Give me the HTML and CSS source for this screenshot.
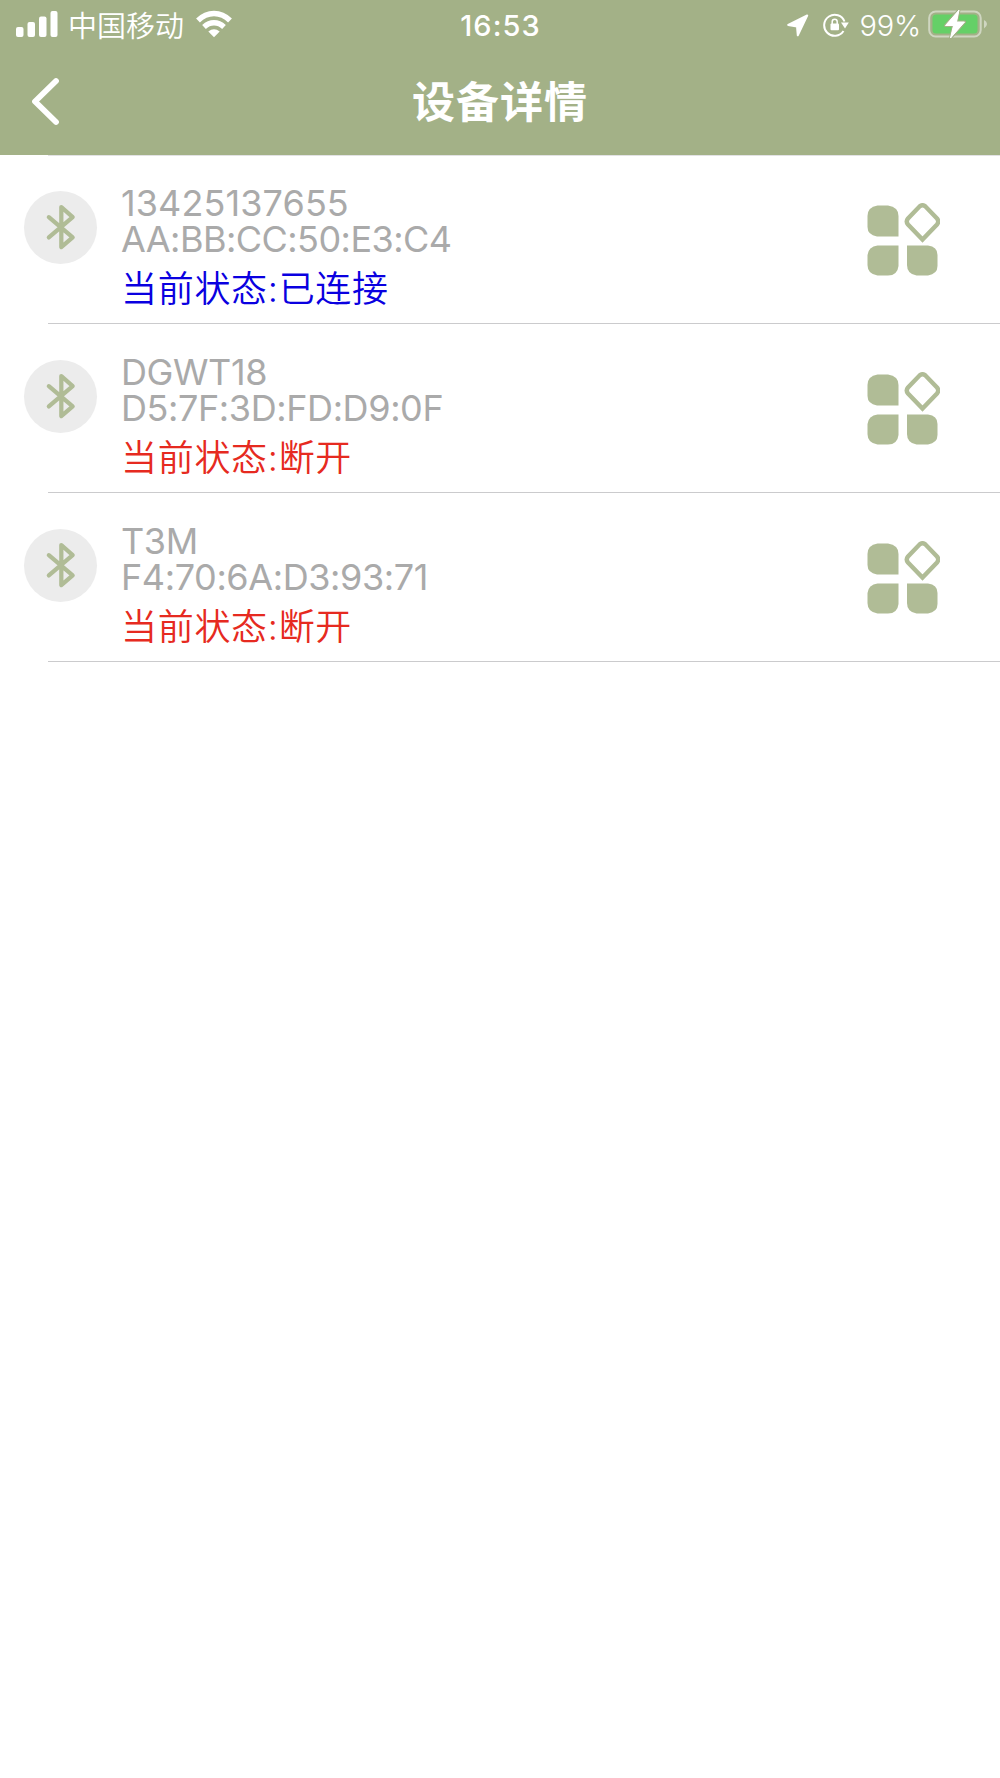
FILE: index.html
```html
<!DOCTYPE html>
<html lang="zh-CN">
<head>
  <meta charset="UTF-8">
  <meta name="viewport" content="width=device-width, initial-scale=1.0">
  <title>设备详情</title>
  <link rel="stylesheet" href="styles.css">
</head>
<body>
  <!-- shared icons -->
  <svg class="sprite" width="0" height="0">
    <symbol id="bluetooth" viewBox="0 0 72 72">
      <path d="M24.500 25.800L48 45.800L36.800 55.300V15.800L48 25.800L24.500 45.800" fill="none" stroke="#b0bc96" stroke-width="4.200" stroke-linecap="round" stroke-linejoin="round"/>
    </symbol>
    <symbol id="modules" viewBox="0 0 74 74">
      <path d="M11.500 2.500H22Q32.500 4 32.500 13V33.500H11Q1.500 32 1.500 24V13Q1.500 4 11.500 2.500Z"/>
      <path d="M11.500 42.500H32.500V63Q31.500 72.500 22 72.500H11.500Q1.500 71 1.500 62V52Q2.500 43.500 11.500 42.500Z"/>
      <path d="M41 42.500H62Q71.500 43.500 71.500 52V63Q71.500 71 62 72.500H50.500Q41 71 41 62Z"/>
      <path d="M53.500 3.500Q56.500 1 59.500 3.500L71 15.500Q73.500 18.500 71 21.500L56.500 36.500L42 21.500Q39.500 18.500 42 15.500Z" fill="none" stroke="#b0bc96" stroke-width="4.400"/>
    </symbol>
  </svg>

  <header class="header">
    <div class="status-bar">
      <div class="status-left">
        <svg class="signal" width="42" height="28" viewBox="0 0 42 28" fill="#fff">
          <rect x="0" y="17" width="7.500" height="10" rx="2"/>
          <rect x="11.500" y="12" width="7.500" height="15" rx="2"/>
          <rect x="23" y="6.500" width="7.500" height="20.500" rx="2"/>
          <rect x="34.500" y="1" width="7" height="26" rx="2"/>
        </svg>
        <span class="carrier">中国移动</span>
        <svg class="wifi" width="36" height="28" viewBox="0 0 36 28">
          <g fill="none" stroke="#fff" stroke-width="5.400">
            <path d="M2 10.500Q9 3.500 18 3.500T34 10.500"/>
            <path d="M8 17Q12.500 12.800 18 12.800T28 17"/>
          </g>
          <path d="M12.300 21.500Q18 17 23.700 21.500L18 27.300Z" fill="#fff"/>
        </svg>
      </div>
      <span class="time">16:53</span>
      <div class="status-right">
        <svg class="location" width="22" height="23" viewBox="0 0 22 23">
          <path d="M20.200 1.500L10.800 21.300L10 12.500L1.200 11Z" fill="#fff" stroke="#fff" stroke-width="2" stroke-linejoin="round"/>
        </svg>
        <svg class="rotation" width="26" height="24" viewBox="0 0 26 24">
          <path d="M20.500 18A10.500 10.500 0 1 1 21.500 8.500" fill="none" stroke="#fff" stroke-width="2"/>
          <path d="M18 9.500H25.800L22 15.500Z" fill="#fff"/>
          <rect x="7.500" y="10.500" width="8.500" height="6.800" rx="1" fill="#fff"/>
          <path d="M9.200 11V8.700a2.500 2.500 0 0 1 5 0V11" fill="none" stroke="#fff" stroke-width="1.500"/>
        </svg>
        <span class="percent">99%</span>
        <svg class="battery" width="60" height="30" viewBox="0 0 60 30">
          <rect x="1.200" y="2.500" width="51.500" height="25" rx="6.500" fill="none" stroke="#cfd6c1" stroke-width="2"/>
          <rect x="4.500" y="5.500" width="45" height="19" rx="3.500" fill="#65d067"/>
          <path d="M56 11Q59 12.500 59 15T56 19.500Z" fill="#cfd6c1"/>
          <path d="M31 1L17.500 16.500H25.500L22.500 29L36.500 13H28.500Z" fill="#fff" stroke="#a3b187" stroke-width="3" paint-order="stroke" stroke-linejoin="round"/>
          <path d="M31 1L17.500 16.500H25.500L22.500 29L36.500 13H28.500Z" fill="#fff" stroke="#fff" stroke-linejoin="round"/>
        </svg>
      </div>
    </div>
    <div class="nav-bar">
      <svg class="back" width="32" height="50" viewBox="0 0 32 50">
        <path d="M26 5L5 25.500L26 46" fill="none" stroke="#fff" stroke-width="5.800" stroke-linecap="round" stroke-linejoin="round"/>
      </svg>
      <h1 class="title">设备详情</h1>
    </div>
  </header>

  <ul class="devices">
    <li class="device">
      <svg class="avatar"><use href="#bluetooth"/></svg>
      <div class="info">
        <p class="name phone">13425137655</p>
        <p class="mac">AA:BB:CC:50:E3:C4</p>
        <p class="state connected">当前状态:已连接</p>
      </div>
      <svg class="modules"><use href="#modules"/></svg>
    </li>
    <li class="device">
      <svg class="avatar"><use href="#bluetooth"/></svg>
      <div class="info">
        <p class="name">DGWT18</p>
        <p class="mac">D5:7F:3D:FD:D9:0F</p>
        <p class="state">当前状态:断开</p>
      </div>
      <svg class="modules"><use href="#modules"/></svg>
    </li>
    <li class="device">
      <svg class="avatar"><use href="#bluetooth"/></svg>
      <div class="info">
        <p class="name">T3M</p>
        <p class="mac">F4:70:6A:D3:93:71</p>
        <p class="state">当前状态:断开</p>
      </div>
      <svg class="modules"><use href="#modules"/></svg>
    </li>
  </ul>
</body>
</html>
```
FILE: styles.css
```css
* {
  box-sizing: border-box;
  margin: 0;
  padding: 0;
}

body {
  background: #fff;
  min-height: 100vh;
  font-family: Inter, "Noto Sans CJK SC", sans-serif;
}

.sprite {
  display: block;
}

.header {
  height: 155px;
  background: #a3b187;
  color: #fff;
}

.status-bar {
  display: grid;
  grid-template-columns: 1fr auto 1fr;
  align-items: center;
  height: 50px;
  padding: 0 12px 0 16px;
}

.status-left,
.status-right {
  display: flex;
  align-items: center;
}

.status-right {
  justify-content: flex-end;
}

.signal {
  margin-top: -2px;
}

.carrier {
  margin: 4px 0 0 10px;
  font-size: 29px;
  font-weight: 350;
  line-height: 46px;
}

.wifi {
  margin: -3px 0 0 12px;
}

.time {
  margin: 0 0 0 -3px;
  font-size: 29px;
  font-weight: 500;
  letter-spacing: 1.1px;
}

.rotation {
  margin: 0 11px 0 14px;
}

.percent {
  font-size: 29px;
  font-weight: 350;
  letter-spacing: -0.2px;
}

.battery {
  margin: -2px 0 0 7px;
}

.nav-bar {
  display: grid;
  grid-template-columns: 32px 1fr 32px;
  align-items: center;
  height: 102px;
  padding: 0 30px;
}

.title {
  margin-top: 1px;
  text-align: center;
  font-size: 43px;
  font-weight: 600;
  line-height: 60px;
  letter-spacing: 1px;
}

.devices {
  list-style: none;
  background: linear-gradient(#e2e2e4, #e2e2e4) 48px 0 / 100% 1px no-repeat;
}

.device {
  display: flex;
  align-items: flex-start;
  height: 169px;
  padding: 30px 60px 0 24px;
  background: linear-gradient(#cbcbcd, #cbcbcd) 48px 168px / 100% 1px no-repeat;
}

.avatar {
  width: 73px;
  height: 73px;
  margin-top: 6px;
  border-radius: 50%;
  background: #ececec;
}

.info {
  flex: 1;
  margin-left: 24px;
  color: #aaa;
  font-size: 36px;
  line-height: 36px;
  font-weight: 400;
}

.name {
  letter-spacing: -0.4px;
}

.phone {
  letter-spacing: 0.1px;
}

.mac {
  letter-spacing: -0.4px;
}

.phone + .mac {
  letter-spacing: -0.55px;
}

.state {
  margin-top: 8px;
  color: #e62a20;
  line-height: 48px;
  font-weight: 350;
  letter-spacing: 0.7px;
}

.connected {
  color: #0a00e0;
}

.modules {
  width: 74px;
  height: 74px;
  margin-top: 18px;
  fill: #b0bc96;
}
```
